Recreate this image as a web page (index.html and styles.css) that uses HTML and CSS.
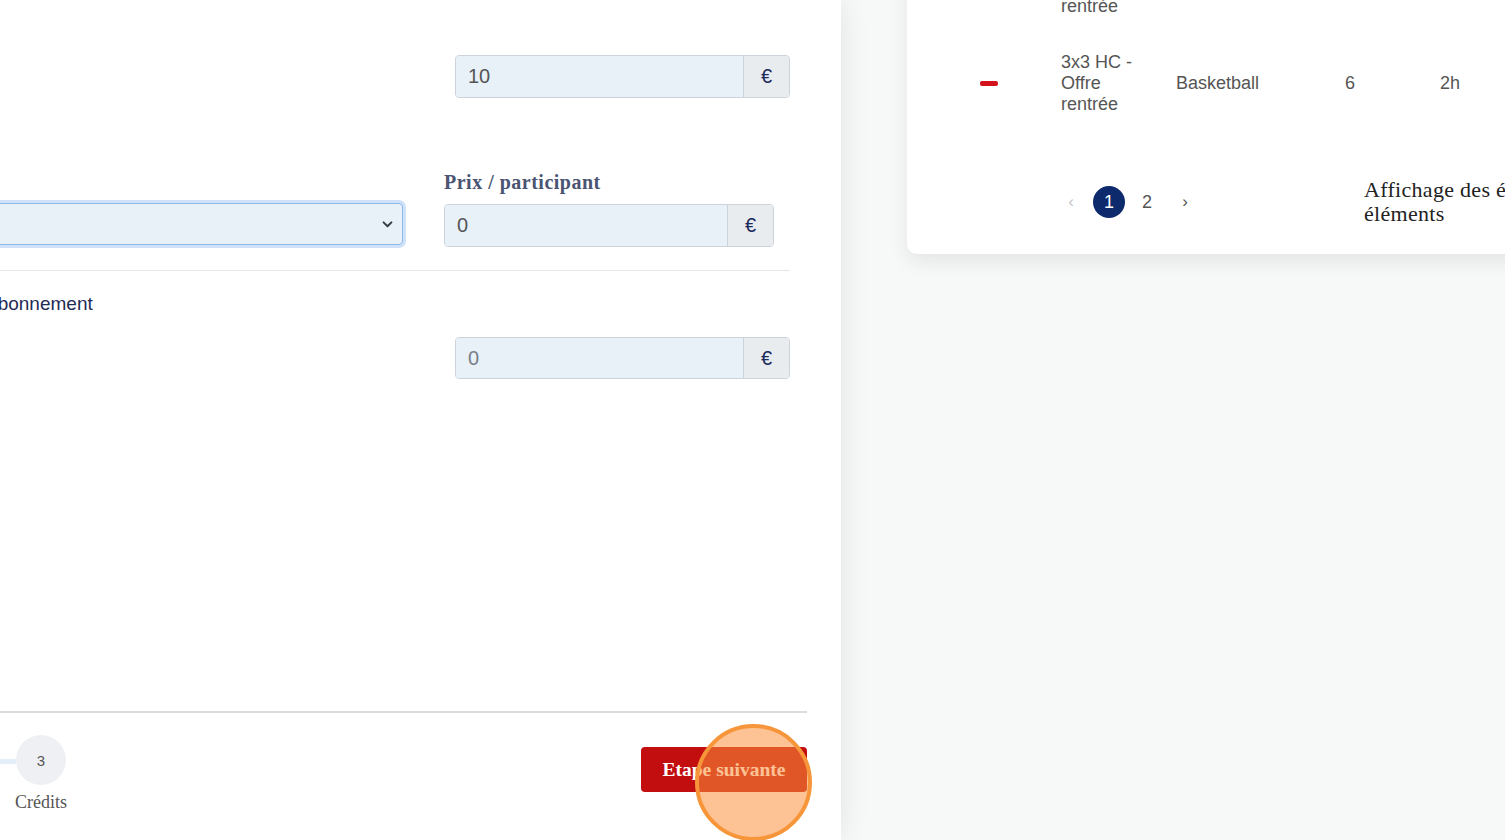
FILE: index.html
```html
<!DOCTYPE html>
<html lang="fr">

<head>
    <meta charset="UTF-8">
    <meta name="viewport" content="width=device-width, initial-scale=1.0">
    <title>Nouvelle offre</title>
    <link rel="stylesheet" href="styles.css">
</head>

<body>
    <div class="screen">
        <section class="drawer">
            <div class="drawer-body">
                <div class="row row-top">
                    <div class="input-group">
                        <input class="input" type="text" value="10">
                        <span class="addon">€</span>
                    </div>
                </div>

                <div class="row row-price">
                    <div class="select select-focus">
                        <svg class="chevron" width="11" height="7" viewBox="0 0 12 8">
                            <path d="M1.5 1.5 L6 6 L10.5 1.5" fill="none" stroke="#343a40" stroke-width="2.2" stroke-linecap="round" stroke-linejoin="round"/>
                        </svg>
                    </div>
                    <div class="field">
                        <label class="field-label">Prix / participant</label>
                        <div class="input-group narrow">
                            <input class="input" type="text" value="0">
                            <span class="addon">€</span>
                        </div>
                    </div>
                </div>

                <hr class="divider">

                <div class="sub-label">Abonnement</div>

                <div class="row row-sub">
                    <div class="input-group short">
                        <input class="input muted" type="text" value="0">
                        <span class="addon">€</span>
                    </div>
                </div>
            </div>

            <footer class="drawer-footer">
                <div class="step">
                    <span class="step-dot">3</span>
                    <span class="step-name">Crédits</span>
                </div>
                <button class="btn-next" type="button">Etape suivante</button>
            </footer>

            <!-- click highlight from the screen recording -->
            <span class="click-marker"></span>
        </section>

        <main class="list-area">
            <div class="card">
                <div class="table-row">
                    <span class="cell"><span class="dash"></span></span>
                    <span class="cell name">3x3 HC - Offre rentrée</span>
                    <span class="cell">Basketball</span>
                    <span class="cell center">6</span>
                    <span class="cell center">2h</span>
                </div>
                <div class="table-row">
                    <span class="cell"><span class="dash"></span></span>
                    <span class="cell name">3x3 HC - Offre rentrée</span>
                    <span class="cell">Basketball</span>
                    <span class="cell center">6</span>
                    <span class="cell center">2h</span>
                </div>

                <div class="pager-row">
                    <div class="pager">
                        <span class="page arrow disabled">‹</span>
                        <span class="page active">1</span>
                        <span class="page">2</span>
                        <span class="page arrow">›</span>
                    </div>
                    <div class="pager-info">Affichage des éléments 1 à 10 sur 12<br>éléments</div>
                </div>
            </div>
        </main>
    </div>
</body>

</html>
```

FILE: styles.css
```css
body {
    margin: 0;
    font-family: 'Liberation Sans', Arial, sans-serif;
    background-color: #f7f8f8;
}

.screen {
    display: flex;
    height: 840px;
    overflow: hidden;
}

/* left drawer with the form */

.drawer {
    position: relative;
    z-index: 1;
    flex: 0 0 841px;
    display: flex;
    flex-direction: column;
    background-color: white;
    overflow: hidden;
    box-shadow: 0 0 28px rgba(0, 0, 0, 0.09);
}

.drawer-body {
    flex: 1;
    padding-top: 55px;
}

.row {
    display: flex;
    justify-content: flex-end;
}

.row-top,
.row-sub {
    padding-right: 51px;
}

.row-price {
    align-items: flex-end;
    gap: 41px;
    margin-top: 73px;
    padding-right: 67px;
}

.row-sub {
    margin-top: 22px;
}

.input-group {
    display: flex;
    width: 335px;
    height: 43px;
    box-sizing: border-box;
    border: 1px solid #cdd3da;
    border-radius: 4px;
    overflow: hidden;
}

.input-group.narrow {
    width: 330px;
}

.input-group.short {
    height: 42px;
}

.input {
    flex: 1;
    min-width: 0;
    border: none;
    padding: 0 12px;
    background-color: #e8f0f8;
    font-family: 'Liberation Sans', Arial, sans-serif;
    font-size: 20px;
    color: #555;
    outline: none;
}

.input.muted {
    color: #7a7f86;
}

.addon {
    display: flex;
    align-items: center;
    justify-content: center;
    width: 45px;
    border-left: 1px solid #cdd3da;
    background-color: #e9ecef;
    color: #1b2b5e;
    font-size: 20px;
}

.select {
    display: flex;
    align-items: center;
    justify-content: flex-end;
    flex: 0 0 600px;
    height: 42px;
    margin-bottom: 2px;
    padding-right: 9px;
    box-sizing: border-box;
    border: 1px solid #8dbbf0;
    border-radius: 4px;
    background-color: #e8f0f8;
}

.select-focus {
    box-shadow: 0 0 0 3px #cfe2f7;
}

.field {
    display: flex;
    flex-direction: column;
}

.field-label {
    font-family: 'Liberation Serif', 'Times New Roman', serif;
    font-weight: bold;
    font-size: 20px;
    line-height: 22px;
    letter-spacing: 0.5px;
    color: #4a5473;
    margin-bottom: 11px;
}

.divider {
    margin: 23px 51px 0 0;
    border: none;
    border-top: 1px solid #e4e6e8;
}

.sub-label {
    margin: 22px 0 0 -15px;
    font-size: 19px;
    line-height: 22px;
    color: #1e2b55;
}

/* footer with steps */

.drawer-footer {
    display: flex;
    justify-content: space-between;
    align-items: flex-start;
    height: 129px;
    box-sizing: border-box;
    margin-right: 34px;
    padding-top: 22px;
    border-top: 2px solid #dcdcdc;
}

.step {
    position: relative;
    display: flex;
    flex-direction: column;
    align-items: center;
    margin-left: 15px;
}

.step::before {
    content: "";
    position: absolute;
    left: -15px;
    top: 24px;
    width: 16px;
    height: 5px;
    background-color: #e3eef8;
}

.step-dot {
    display: flex;
    align-items: center;
    justify-content: center;
    width: 50px;
    height: 50px;
    border-radius: 50%;
    background-color: #eef0f4;
    color: #555;
    font-size: 15px;
}

.step-name {
    margin-top: 7px;
    font-family: 'Liberation Serif', 'Times New Roman', serif;
    font-size: 18px;
    line-height: 20px;
    color: #555;
}

.btn-next {
    width: 166px;
    height: 45px;
    margin-top: 12px;
    border: none;
    border-radius: 4px;
    background-color: #c20e0e;
    color: white;
    font-family: 'Liberation Serif', 'Times New Roman', serif;
    font-weight: bold;
    font-size: 19.5px;
    cursor: pointer;
}

.click-marker {
    position: absolute;
    left: 695px;
    top: 724px;
    width: 117px;
    height: 117px;
    box-sizing: border-box;
    border: 4px solid #f7953a;
    border-radius: 50%;
    background-color: rgba(251, 146, 60, 0.55);
}

/* right side list */

.list-area {
    flex: 1;
    padding-left: 66px;
    background-color: #f7f8f8;
}

.card {
    width: 720px;
    margin-top: -63px;
    background-color: white;
    border-radius: 10px;
    box-shadow: 0 8px 20px rgba(0, 0, 0, 0.08);
}

.table-row {
    display: grid;
    grid-template-columns: 154px 115px 134px 80px 120px;
    align-items: center;
    padding: 17px 0 18px;
    font-size: 18px;
    line-height: 21px;
    color: #555;
}

.cell.name {
    padding-right: 25px;
}

.cell.center {
    text-align: center;
}

.dash {
    display: block;
    width: 18px;
    height: 5px;
    margin-left: 73px;
    border-radius: 2px;
    background-color: #d4121c;
}

.pager-row {
    display: flex;
    align-items: center;
    padding: 45px 0 28px 148px;
}

.pager {
    display: flex;
    gap: 6px;
}

.page {
    display: flex;
    align-items: center;
    justify-content: center;
    width: 32px;
    height: 32px;
    border-radius: 50%;
    font-size: 18px;
    color: #555;
}

.page.arrow {
    font-size: 17px;
}

.page.disabled {
    color: #c4c4c4;
}

.page.active {
    background-color: #0c2a6c;
    color: white;
}

.pager-info {
    margin-left: 163px;
    font-family: 'Liberation Serif', 'Times New Roman', serif;
    font-size: 22px;
    line-height: 24px;
    letter-spacing: 0.3px;
    color: #222;
    white-space: nowrap;
}
```
